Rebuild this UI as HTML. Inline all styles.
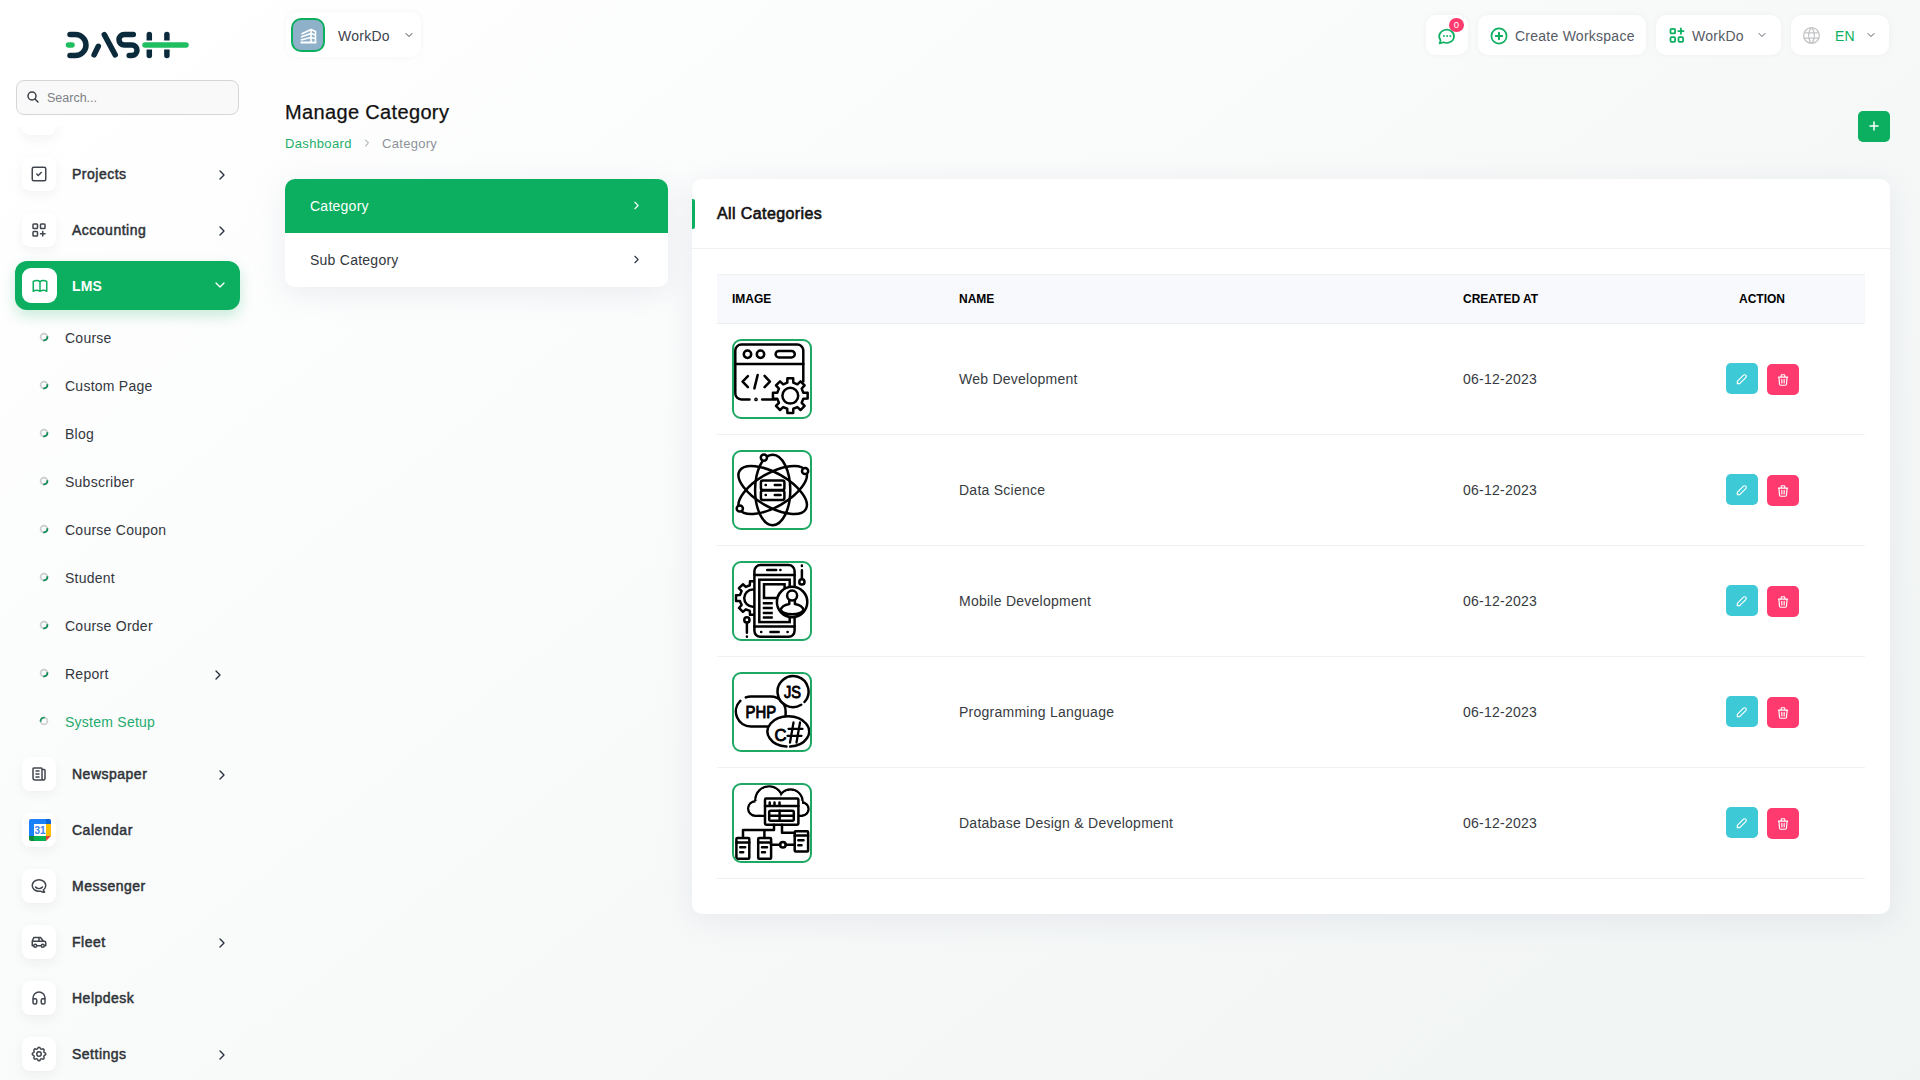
<!DOCTYPE html>
<html><head><meta charset="utf-8">
<style>
*{box-sizing:border-box;margin:0;padding:0}
html,body{width:1920px;height:1080px;overflow:hidden}
body{font-family:"Liberation Sans",sans-serif;background:#fff;position:relative;color:#293240}
.bg{position:absolute;left:0;top:0;width:1920px;height:1080px;background:linear-gradient(141.55deg,rgba(240,244,243,0) 3.46%,#f0f4f3 99.86%)}
.abs{position:absolute}
.ibox{position:absolute;width:34px;height:34px;background:#fff;border-radius:8px;box-shadow:0 4px 12px rgba(0,0,0,0.05);display:flex;align-items:center;justify-content:center}
.nav{position:absolute;left:72px;font-size:14px;color:#2f3338;-webkit-text-stroke:0.5px currentColor;letter-spacing:0.5px}
.ls{letter-spacing:0.25px}
.chev{position:absolute}
.sub{position:absolute;left:65px;font-size:14px;color:#33373d;letter-spacing:0.25px}
.dot{position:absolute;left:40px;width:7px;height:7px;border-radius:50%;border:1.3px solid #b9bec5;border-right-color:#0CAF60;border-bottom-color:#0CAF60;transform:rotate(-20deg)}
.hbox{position:absolute;top:15px;height:40px;background:#fff;border-radius:10px;box-shadow:0 0 6px rgba(0,0,0,0.04)}
.card{position:absolute;background:#fff;border-radius:10px;box-shadow:0 6px 30px rgba(182,186,203,0.24)}
.th{position:absolute;top:292px;font-size:12px;font-weight:bold;color:#000}
.td{position:absolute;font-size:14px;color:#373b42;letter-spacing:0.25px}
.img{position:absolute;left:732px;width:80px;height:80px;border:2px solid #1ea864;border-radius:9px;background:#fff;overflow:hidden}
.btn{position:absolute;width:32px;height:31px;border-radius:5px;display:flex;align-items:center;justify-content:center}
.rowline{position:absolute;left:717px;width:1148px;height:1px;background:#f0f0f0}
</style></head>
<body>
<div class="bg"></div>

<!-- LOGO -->
<svg class="abs" style="left:0;top:0" width="260" height="70" viewBox="0 0 260 70">
  <g fill="none" stroke-linecap="round" stroke-width="5.5">
    <path d="M70,34.5 H75.5 A10.5,10.5 0 0 1 75.5,55.5 H70" stroke="#0b2a3c"/>
    <line x1="68.5" y1="45" x2="72" y2="45" stroke="#1fbf61"/>
    <line x1="104.3" y1="34.6" x2="115.2" y2="54.9" stroke="#0b2a3c"/>
    <line x1="98.3" y1="46.3" x2="94.1" y2="54.9" stroke="#0b2a3c"/>
    <path d="M133.3,34.5 H124.25 A5.25,5.25 0 0 0 124.25,45 H131.75 A5.25,5.25 0 0 1 131.75,55.5 H129.2" stroke="#0b2a3c"/>
    <line x1="149.3" y1="34.5" x2="149.3" y2="55.5" stroke="#0b2a3c"/>
    <line x1="166.9" y1="34.5" x2="166.9" y2="55.5" stroke="#0b2a3c"/>
    <line x1="145" y1="45" x2="186" y2="45" stroke="#fff" stroke-width="9"/>
    <line x1="145" y1="45" x2="186" y2="45" stroke="#1fbf61"/>
  </g>
</svg>

<!-- SEARCH -->
<div class="abs" style="left:16px;top:80px;width:223px;height:35px;border:1px solid #d4d6d8;border-radius:8px;background:#f9f9f9"></div>
<svg class="abs" style="left:26px;top:90px" width="14" height="14" viewBox="0 0 14 14"><circle cx="6" cy="6" r="4" fill="none" stroke="#3a3f47" stroke-width="1.5"/><line x1="9" y1="9" x2="12" y2="12" stroke="#3a3f47" stroke-width="1.5" stroke-linecap="round"/></svg>
<div class="abs" style="left:47px;top:90.5px;font-size:12.5px;color:#7d8186">Search...</div>

<!-- SIDEBAR NAV -->
<div class="abs" style="left:0;top:127px;width:260px;height:953px;overflow:hidden">
<div class="abs" style="left:0;top:-127px;width:260px;height:1080px">
<div class="ibox" style="left:22px;top:101px"></div>
<div class="ibox" style="left:22px;top:157px"></div>
<svg class="abs" style="left:30px;top:165px" width="18" height="18" viewBox="0 0 24 24" fill="none" stroke="#41464e" stroke-width="2" stroke-linecap="round" stroke-linejoin="round"><path d="M3 5a2 2 0 0 1 2 -2h14a2 2 0 0 1 2 2v14a2 2 0 0 1 -2 2h-14a2 2 0 0 1 -2 -2z M9 12l2 2l4 -4"/></svg>
<div class="nav" style="top:166px">Projects</div>
<svg class="abs" style="left:214px;top:167px" width="16" height="16" viewBox="0 0 24 24" fill="none" stroke="#293240" stroke-width="2" stroke-linecap="round" stroke-linejoin="round"><path d="M9 6l6 6l-6 6"/></svg>
<div class="ibox" style="left:22px;top:213px"></div>
<svg class="abs" style="left:30px;top:221px" width="18" height="18" viewBox="0 0 24 24" fill="none" stroke="#41464e" stroke-width="2" stroke-linecap="round" stroke-linejoin="round"><path d="M4 5a1 1 0 0 1 1 -1h4a1 1 0 0 1 1 1v4a1 1 0 0 1 -1 1h-4a1 1 0 0 1 -1 -1z M14 5a1 1 0 0 1 1 -1h4a1 1 0 0 1 1 1v4a1 1 0 0 1 -1 1h-4a1 1 0 0 1 -1 -1z M4 15a1 1 0 0 1 1 -1h4a1 1 0 0 1 1 1v4a1 1 0 0 1 -1 1h-4a1 1 0 0 1 -1 -1z M14 17h6m-3 -3v6"/></svg>
<div class="nav" style="top:222px">Accounting</div>
<svg class="abs" style="left:214px;top:223px" width="16" height="16" viewBox="0 0 24 24" fill="none" stroke="#293240" stroke-width="2" stroke-linecap="round" stroke-linejoin="round"><path d="M9 6l6 6l-6 6"/></svg>
<div class="abs" style="left:15px;top:261px;width:225px;height:49px;background:#0CAF60;border-radius:12px;box-shadow:0 6px 14px rgba(12,175,96,0.22)"></div>
<div class="ibox" style="left:22px;top:268px;box-shadow:none;width:35px;height:35px;border-radius:9px"></div>
<svg class="abs" style="left:30.5px;top:277px" width="18" height="18" viewBox="0 0 24 24" fill="none" stroke="#0CAF60" stroke-width="2" stroke-linecap="round" stroke-linejoin="round"><path d="M3 19a9 9 0 0 1 9 0a9 9 0 0 1 9 0 M3 6a9 9 0 0 1 9 0a9 9 0 0 1 9 0 M3 6l0 13 M12 6l0 13 M21 6l0 13"/></svg>
<div class="nav" style="top:278px;color:#fff;font-weight:bold;-webkit-text-stroke:0;letter-spacing:0.2px">LMS</div>
<svg class="abs" style="left:212px;top:277px" width="16" height="16" viewBox="0 0 24 24" fill="none" stroke="#fff" stroke-width="2" stroke-linecap="round" stroke-linejoin="round"><path d="M6 9l6 6l6 -6"/></svg>
<div class="sub" style="top:330px">Course</div>
<svg class="abs" style="left:38px;top:331px" width="12" height="12" viewBox="0 0 12 12"><circle cx="6" cy="6" r="3.4" fill="none" stroke="#c9cbcd" stroke-width="1.7"/><path d="M9.4,6 A3.4,3.4 0 0 1 6,9.4" fill="none" stroke="#1f8f5f" stroke-width="1.9" stroke-linecap="round"/></svg>
<div class="sub" style="top:378px">Custom Page</div>
<svg class="abs" style="left:38px;top:379px" width="12" height="12" viewBox="0 0 12 12"><circle cx="6" cy="6" r="3.4" fill="none" stroke="#c9cbcd" stroke-width="1.7"/><path d="M9.4,6 A3.4,3.4 0 0 1 6,9.4" fill="none" stroke="#1f8f5f" stroke-width="1.9" stroke-linecap="round"/></svg>
<div class="sub" style="top:426px">Blog</div>
<svg class="abs" style="left:38px;top:427px" width="12" height="12" viewBox="0 0 12 12"><circle cx="6" cy="6" r="3.4" fill="none" stroke="#c9cbcd" stroke-width="1.7"/><path d="M9.4,6 A3.4,3.4 0 0 1 6,9.4" fill="none" stroke="#1f8f5f" stroke-width="1.9" stroke-linecap="round"/></svg>
<div class="sub" style="top:474px">Subscriber</div>
<svg class="abs" style="left:38px;top:475px" width="12" height="12" viewBox="0 0 12 12"><circle cx="6" cy="6" r="3.4" fill="none" stroke="#c9cbcd" stroke-width="1.7"/><path d="M9.4,6 A3.4,3.4 0 0 1 6,9.4" fill="none" stroke="#1f8f5f" stroke-width="1.9" stroke-linecap="round"/></svg>
<div class="sub" style="top:522px">Course Coupon</div>
<svg class="abs" style="left:38px;top:523px" width="12" height="12" viewBox="0 0 12 12"><circle cx="6" cy="6" r="3.4" fill="none" stroke="#c9cbcd" stroke-width="1.7"/><path d="M9.4,6 A3.4,3.4 0 0 1 6,9.4" fill="none" stroke="#1f8f5f" stroke-width="1.9" stroke-linecap="round"/></svg>
<div class="sub" style="top:570px">Student</div>
<svg class="abs" style="left:38px;top:571px" width="12" height="12" viewBox="0 0 12 12"><circle cx="6" cy="6" r="3.4" fill="none" stroke="#c9cbcd" stroke-width="1.7"/><path d="M9.4,6 A3.4,3.4 0 0 1 6,9.4" fill="none" stroke="#1f8f5f" stroke-width="1.9" stroke-linecap="round"/></svg>
<div class="sub" style="top:618px">Course Order</div>
<svg class="abs" style="left:38px;top:619px" width="12" height="12" viewBox="0 0 12 12"><circle cx="6" cy="6" r="3.4" fill="none" stroke="#c9cbcd" stroke-width="1.7"/><path d="M9.4,6 A3.4,3.4 0 0 1 6,9.4" fill="none" stroke="#1f8f5f" stroke-width="1.9" stroke-linecap="round"/></svg>
<div class="sub" style="top:666px">Report</div>
<svg class="abs" style="left:38px;top:667px" width="12" height="12" viewBox="0 0 12 12"><circle cx="6" cy="6" r="3.4" fill="none" stroke="#c9cbcd" stroke-width="1.7"/><path d="M9.4,6 A3.4,3.4 0 0 1 6,9.4" fill="none" stroke="#1f8f5f" stroke-width="1.9" stroke-linecap="round"/></svg>
<svg class="abs" style="left:210px;top:667px" width="16" height="16" viewBox="0 0 24 24" fill="none" stroke="#293240" stroke-width="2" stroke-linecap="round" stroke-linejoin="round"><path d="M9 6l6 6l-6 6"/></svg>
<div class="sub" style="top:714px;color:#1faa6e">System Setup</div>
<svg class="abs" style="left:38px;top:715px" width="12" height="12" viewBox="0 0 12 12"><circle cx="6" cy="6" r="3.4" fill="none" stroke="#cfd2d0" stroke-width="1.7"/><path d="M2.6,6 A3.4,3.4 0 0 1 6,2.6" fill="none" stroke="#2a9a6a" stroke-width="1.9" stroke-linecap="round"/></svg>
<div class="ibox" style="left:22px;top:757px"></div>
<svg class="abs" style="left:30px;top:765px" width="18" height="18" viewBox="0 0 24 24" fill="none" stroke="#41464e" stroke-width="2" stroke-linecap="round" stroke-linejoin="round"><path d="M16 6h3a1 1 0 0 1 1 1v11a2 2 0 0 1 -4 0v-13a1 1 0 0 0 -1 -1h-10a1 1 0 0 0 -1 1v12a3 3 0 0 0 3 3h11 M8 8l4 0 M8 12l4 0 M8 16l4 0"/></svg>
<div class="nav" style="top:766px">Newspaper</div>
<svg class="abs" style="left:214px;top:767px" width="16" height="16" viewBox="0 0 24 24" fill="none" stroke="#293240" stroke-width="2" stroke-linecap="round" stroke-linejoin="round"><path d="M9 6l6 6l-6 6"/></svg>
<div class="ibox" style="left:22px;top:813px"></div>
<svg class="abs" style="left:29px;top:819px" width="22" height="22" viewBox="0 0 22 22">
<path d="M0,2 Q0,0 2,0 H17 V5 H5 V17 H0 Z" fill="#1a80f5"/>
<path d="M17,0 H20.5 Q22,0 22,1.5 V5 H17Z" fill="#0b64d8"/>
<rect x="17" y="5" width="5" height="12" fill="#fbbc04"/>
<rect x="5" y="17" width="12" height="5" fill="#06b24f"/>
<path d="M0,17 H5 V22 H2 Q0,22 0,20 Z" fill="#0a8a3a"/>
<path d="M17,17 H22 L17,22 Z" fill="#ea4335"/>
<rect x="5" y="5" width="12" height="12" fill="#fff"/>
<text x="11" y="14.8" style="font-family:'Liberation Sans',sans-serif;font-size:10px;font-weight:bold" fill="#3b82f0" text-anchor="middle">31</text>
</svg>
<div class="nav" style="top:822px">Calendar</div>
<div class="ibox" style="left:22px;top:869px"></div>
<svg class="abs" style="left:30px;top:877px" width="18" height="18" viewBox="0 0 24 24" fill="none" stroke="#41464e" stroke-width="2" stroke-linecap="round" stroke-linejoin="round"><path d="M17.802 17.292s.077 -.055 .2 -.149c1.843 -1.425 3 -3.49 3 -5.789c0 -4.286 -4.03 -7.764 -9 -7.764c-4.97 0 -9 3.478 -9 7.764c0 4.288 4.03 7.646 9 7.646c.424 0 1.12 -.028 2.088 -.084c1.262 .82 3.104 1.493 4.716 1.493c.499 0 .734 -.41 .414 -.828c-.486 -.596 -1.156 -1.551 -1.416 -2.29z M7.5 13.5c2.5 2.5 6.5 2.5 9 0"/></svg>
<div class="nav" style="top:878px">Messenger</div>
<div class="ibox" style="left:22px;top:925px"></div>
<svg class="abs" style="left:30px;top:933px" width="18" height="18" viewBox="0 0 24 24" fill="none" stroke="#41464e" stroke-width="2" stroke-linecap="round" stroke-linejoin="round"><path d="M5 17a2 2 0 1 0 4 0a2 2 0 1 0 -4 0 M15 17a2 2 0 1 0 4 0a2 2 0 1 0 -4 0 M5 17h-2v-6l2 -5h9l4 5h1a2 2 0 0 1 2 2v4h-2m-4 0h-6m-6 -6h15m-6 0v-5"/></svg>
<div class="nav" style="top:934px">Fleet</div>
<svg class="abs" style="left:214px;top:935px" width="16" height="16" viewBox="0 0 24 24" fill="none" stroke="#293240" stroke-width="2" stroke-linecap="round" stroke-linejoin="round"><path d="M9 6l6 6l-6 6"/></svg>
<div class="ibox" style="left:22px;top:981px"></div>
<svg class="abs" style="left:30px;top:989px" width="18" height="18" viewBox="0 0 24 24" fill="none" stroke="#41464e" stroke-width="2" stroke-linecap="round" stroke-linejoin="round"><path d="M4 15a2 2 0 0 1 2 -2h1a2 2 0 0 1 2 2v3a2 2 0 0 1 -2 2h-1a2 2 0 0 1 -2 -2z M15 15a2 2 0 0 1 2 -2h1a2 2 0 0 1 2 2v3a2 2 0 0 1 -2 2h-1a2 2 0 0 1 -2 -2z M4 15v-3a8 8 0 0 1 16 0v3"/></svg>
<div class="nav" style="top:990px">Helpdesk</div>
<div class="ibox" style="left:22px;top:1037px"></div>
<svg class="abs" style="left:30px;top:1045px" width="18" height="18" viewBox="0 0 24 24" fill="none" stroke="#41464e" stroke-width="2" stroke-linecap="round" stroke-linejoin="round"><path d="M10.325 4.317c.426 -1.756 2.924 -1.756 3.35 0a1.724 1.724 0 0 0 2.573 1.066c1.543 -.94 3.31 .826 2.37 2.37a1.724 1.724 0 0 0 1.065 2.572c1.756 .426 1.756 2.924 0 3.35a1.724 1.724 0 0 0 -1.066 2.573c.94 1.543 -.826 3.31 -2.37 2.37a1.724 1.724 0 0 0 -2.572 1.065c-.426 1.756 -2.924 1.756 -3.35 0a1.724 1.724 0 0 0 -2.573 -1.066c-1.543 .94 -3.31 -.826 -2.37 -2.37a1.724 1.724 0 0 0 -1.065 -2.572c-1.756 -.426 -1.756 -2.924 0 -3.35a1.724 1.724 0 0 0 1.066 -2.573c-.94 -1.543 .826 -3.31 2.37 -2.37c1 .608 2.296 .07 2.572 -1.065z M9 12a3 3 0 1 0 6 0a3 3 0 0 0 -6 0"/></svg>
<div class="nav" style="top:1046px">Settings</div>
<svg class="abs" style="left:214px;top:1047px" width="16" height="16" viewBox="0 0 24 24" fill="none" stroke="#293240" stroke-width="2" stroke-linecap="round" stroke-linejoin="round"><path d="M9 6l6 6l-6 6"/></svg>
</div></div>

<!-- HEADER -->
<div class="hbox" style="left:286px;top:12px;width:135px;height:45px"></div>
<div class="abs" style="left:291px;top:18px;width:34px;height:34px;border:2px solid #0CAF60;border-radius:10px;background:#8fb0c9;overflow:hidden">
<svg class="abs" style="left:6px;top:6px" width="20" height="20" viewBox="0 0 20 20" fill="none" stroke="#fff" stroke-width="1.6" stroke-linejoin="round">
<path d="M2.5,8 L12,3.5 L16.5,5.5 V15.5"/><path d="M2,11 L12,7.5 L16.5,9"/><path d="M1.8,14 L12,11.5 L16.5,12.5"/><path d="M1.5,16.5 H17.5" stroke-width="1.8"/><path d="M12,3.5 V16"/>
</svg></div>
<div class="abs" style="left:338px;top:28px;font-size:14px;color:#3d434b;letter-spacing:0.25px">WorkDo</div>
<svg class="abs" style="left:403px;top:29px" width="12" height="12" viewBox="0 0 24 24" fill="none" stroke="#3d434b" stroke-width="2" stroke-linecap="round" stroke-linejoin="round"><path d="M6 9l6 6l6 -6"/></svg>

<div class="hbox" style="left:1426px;width:42px"></div>
<svg class="abs" style="left:1437px;top:26px" width="20" height="20" viewBox="0 0 20 20" fill="none" stroke="#0CAF60" stroke-width="1.7" stroke-linecap="round" stroke-linejoin="round">
<path d="M2.6,17.4 L3.6,14.2 A7.4,6.6 0 1 1 6.4,16.3 Z"/>
<circle cx="6.8" cy="10" r="0.5" fill="#0CAF60" stroke-width="0.9"/><circle cx="10" cy="10" r="0.5" fill="#0CAF60" stroke-width="0.9"/><circle cx="13.2" cy="10" r="0.5" fill="#0CAF60" stroke-width="0.9"/>
</svg>
<div class="abs" style="left:1449px;top:17.5px;width:15px;height:14.5px;border-radius:50%;background:#ff3a6e;color:#fff;font-size:9.5px;text-align:center;line-height:14.5px">0</div>

<div class="hbox" style="left:1478px;width:168px"></div>
<svg class="abs" style="left:1489px;top:26px" width="20" height="20" viewBox="0 0 20 20" fill="none" stroke="#0CAF60" stroke-width="1.7" stroke-linecap="round">
<circle cx="10" cy="10" r="7.6"/><path d="M10,6.8 V13.2 M6.8,10 H13.2" stroke-width="2"/>
</svg>
<div class="abs" style="left:1515px;top:28px;font-size:14px;color:#555b66;letter-spacing:0.25px">Create Workspace</div>

<div class="hbox" style="left:1656px;width:125px"></div>
<svg class="abs" style="left:1668px;top:26px" width="18" height="18" viewBox="0 0 18 18" fill="none" stroke="#0CAF60" stroke-width="1.8" stroke-linecap="round" stroke-linejoin="round">
<rect x="2.5" y="2.8" width="4.6" height="4.6" rx="1"/><rect x="2.5" y="11.2" width="4.6" height="4.6" rx="1"/><rect x="10.5" y="11.2" width="4.6" height="4.6" rx="1"/><path d="M10.3,5.1 H15.6 M12.95,2.4 V7.8"/>
</svg>
<div class="abs" style="left:1692px;top:28px;font-size:14px;color:#555b66;letter-spacing:0.25px">WorkDo</div>
<svg class="abs" style="left:1756px;top:29px" width="12" height="12" viewBox="0 0 24 24" fill="none" stroke="#555b66" stroke-width="2" stroke-linecap="round" stroke-linejoin="round"><path d="M6 9l6 6l6 -6"/></svg>

<div class="hbox" style="left:1791px;width:98px"></div>
<svg class="abs" style="left:1801px;top:25px" width="21" height="21" viewBox="0 0 24 24" fill="none" stroke="#c2c4c6" stroke-width="1.5" stroke-linecap="round" stroke-linejoin="round">
<path d="M3 12a9 9 0 1 0 18 0a9 9 0 0 0 -18 0 M3.6 9h16.8 M3.6 15h16.8 M11.5 3a17 17 0 0 0 0 18 M12.5 3a17 17 0 0 1 0 18"/>
</svg>
<div class="abs" style="left:1835px;top:28px;font-size:14px;color:#0CAF60;letter-spacing:0.25px">EN</div>
<svg class="abs" style="left:1865px;top:29px" width="12" height="12" viewBox="0 0 24 24" fill="none" stroke="#555b66" stroke-width="2" stroke-linecap="round" stroke-linejoin="round"><path d="M6 9l6 6l6 -6"/></svg>

<!-- TITLE -->
<div class="abs" style="left:285px;top:101px;font-size:20px;color:#111;letter-spacing:0.35px;-webkit-text-stroke:0.25px currentColor">Manage Category</div>
<div class="abs" style="left:285px;top:135.5px;font-size:13px;color:#1fae6a;letter-spacing:0.35px">Dashboard</div>
<svg class="abs" style="left:361px;top:137px" width="12" height="12" viewBox="0 0 24 24" fill="none" stroke="#8d939b" stroke-width="2" stroke-linecap="round" stroke-linejoin="round"><path d="M9 6l6 6l-6 6"/></svg>
<div class="abs" style="left:382px;top:135.5px;font-size:13px;color:#8d939b;letter-spacing:0.3px">Category</div>
<div class="abs" style="left:1858px;top:111px;width:32px;height:31px;background:#0CAF60;border-radius:5px"></div>
<svg class="abs" style="left:1868px;top:120px" width="12" height="12" viewBox="0 0 12 12" stroke="#fff" stroke-width="1.5" stroke-linecap="round"><path d="M6,2 V10 M2,6 H10"/></svg>

<!-- LEFT MENU CARD -->
<div class="card" style="left:285px;top:179px;width:383px;height:108px;overflow:hidden">
  <div class="abs" style="left:0;top:0;width:383px;height:54px;background:#0CAF60"></div>
</div>
<div class="abs" style="left:310px;top:198px;font-size:14px;color:#fff;letter-spacing:0.25px">Category</div>
<svg class="abs" style="left:630px;top:199px" width="13" height="13" viewBox="0 0 24 24" fill="none" stroke="#fff" stroke-width="2" stroke-linecap="round" stroke-linejoin="round"><path d="M9 6l6 6l-6 6"/></svg>
<div class="abs" style="left:310px;top:252px;font-size:14px;color:#33373d;letter-spacing:0.25px">Sub Category</div>
<svg class="abs" style="left:630px;top:253px" width="13" height="13" viewBox="0 0 24 24" fill="none" stroke="#293240" stroke-width="2" stroke-linecap="round" stroke-linejoin="round"><path d="M9 6l6 6l-6 6"/></svg>

<!-- TABLE CARD -->
<div class="card" style="left:692px;top:179px;width:1198px;height:735px"></div>
<div class="abs" style="left:692px;top:199px;width:3px;height:29.5px;background:#0CAF60;border-radius:0 2px 2px 0"></div>
<div class="abs" style="left:717px;top:204.5px;font-size:16px;color:#111;-webkit-text-stroke:0.6px currentColor;letter-spacing:0.4px">All Categories</div>
<div class="abs" style="left:692px;top:248px;width:1198px;height:1px;background:#f1f1f1"></div>

<div class="abs" style="left:717px;top:274px;width:1148px;height:50px;background:#f8f9fc;border-top:1px solid #eef0f2;border-bottom:1px solid #eceef0"></div>
<div class="th" style="left:732px">IMAGE</div>
<div class="th" style="left:959px">NAME</div>
<div class="th" style="left:1463px">CREATED AT</div>
<div class="th" style="left:1739px">ACTION</div>
<div class="img" style="top:339px"><svg class="abs" style="left:-2px;top:-2px" width="80" height="80" viewBox="0 0 80 80"><g stroke="#000" stroke-width="2.5" fill="none" stroke-linecap="round" stroke-linejoin="round"><path d="M17.5,60.4 H9.3 A6,6 0 0 1 3.3,54.4 V11.6 A6,6 0 0 1 9.3,5.6 H65.3 A6,6 0 0 1 71.3,11.6 V42.5"/><path d="M30.2,60.4 H43.6"/><circle cx="24" cy="60.4" r="0.6" fill="#000"/><path d="M3.3,25 H71.3"/><circle cx="15.5" cy="15.2" r="3.7"/><circle cx="28.5" cy="15.2" r="3.7"/><rect x="43.6" y="11.9" width="19.2" height="6.5" rx="3.25"/><path d="M15.9,37.1 L10.6,42.6 L15.9,48.2 M25.7,35.9 L22.4,49.4 M32.6,36.8 L37.9,42.6 L32.6,48.2"/><path d="M61.33,69.75 L61.19,74.06 L55.41,74.06 L55.27,69.75 L51.21,68.07 L48.07,71.02 L43.98,66.93 L46.93,63.79 L45.25,59.73 L40.94,59.59 L40.94,53.81 L45.25,53.67 L46.93,49.61 L43.98,46.47 L48.07,42.38 L51.21,45.33 L55.27,43.65 L55.41,39.34 L61.19,39.34 L61.33,43.65 L65.39,45.33 L68.53,42.38 L72.62,46.47 L69.67,49.61 L71.35,53.67 L75.66,53.81 L75.66,59.59 L71.35,59.73 L69.67,63.79 L72.62,66.93 L68.53,71.02 L65.39,68.07 Z" fill="#fff"/><circle cx="58.3" cy="56.7" r="7.9"/></g></svg></div>
<div class="td" style="left:959px;top:370.5px">Web Development</div>
<div class="td" style="left:1463px;top:370.5px">06-12-2023</div>
<div class="btn" style="left:1726px;top:363px;background:#3ec9d6"><svg width="14" height="14" viewBox="0 0 24 24" fill="none" stroke="#fff" stroke-width="2" stroke-linecap="round" stroke-linejoin="round"><path d="M4 20h4l10.5 -10.5a2.828 2.828 0 1 0 -4 -4l-10.5 10.5v4"/></svg></div>
<div class="btn" style="left:1767px;top:364px;background:#ff3a6e"><svg width="14" height="14" viewBox="0 0 24 24" fill="none" stroke="#fff" stroke-width="2" stroke-linecap="round" stroke-linejoin="round"><path d="M4 7l16 0 M10 11l0 6 M14 11l0 6 M5 7l1 12a2 2 0 0 0 2 2h8a2 2 0 0 0 2 -2l1 -12 M9 7v-3a1 1 0 0 1 1 -1h4a1 1 0 0 1 1 1v3"/></svg></div>
<div class="rowline" style="top:434px"></div>
<div class="img" style="top:450px"><svg class="abs" style="left:-2px;top:-2px" width="80" height="80" viewBox="0 0 80 80"><g stroke="#000" stroke-width="2.5" fill="none" stroke-linecap="round" stroke-linejoin="round"><ellipse cx="40.7" cy="40" rx="17.6" ry="35.2"/><ellipse cx="40.7" cy="40" rx="38.3" ry="16.8" transform="rotate(30 40.7 40)"/><ellipse cx="40.7" cy="40" rx="38.3" ry="16.8" transform="rotate(-30 40.7 40)"/><circle cx="31.9" cy="7.6" r="3.1" fill="#fff"/><circle cx="73.1" cy="21" r="3.1" fill="#fff"/><circle cx="7.8" cy="58.5" r="3.1" fill="#fff"/><rect x="28.9" y="30.6" width="23.5" height="9.3" rx="2" fill="#fff"/><rect x="28.9" y="40.6" width="23.5" height="9.3" rx="2" fill="#fff"/><path d="M33.6,35.1 h0.3 M42.8,35.1 h5.8 M33.6,45 h0.3 M42.8,45 h5.8"/></g></svg></div>
<div class="td" style="left:959px;top:481.5px">Data Science</div>
<div class="td" style="left:1463px;top:481.5px">06-12-2023</div>
<div class="btn" style="left:1726px;top:474px;background:#3ec9d6"><svg width="14" height="14" viewBox="0 0 24 24" fill="none" stroke="#fff" stroke-width="2" stroke-linecap="round" stroke-linejoin="round"><path d="M4 20h4l10.5 -10.5a2.828 2.828 0 1 0 -4 -4l-10.5 10.5v4"/></svg></div>
<div class="btn" style="left:1767px;top:475px;background:#ff3a6e"><svg width="14" height="14" viewBox="0 0 24 24" fill="none" stroke="#fff" stroke-width="2" stroke-linecap="round" stroke-linejoin="round"><path d="M4 7l16 0 M10 11l0 6 M14 11l0 6 M5 7l1 12a2 2 0 0 0 2 2h8a2 2 0 0 0 2 -2l1 -12 M9 7v-3a1 1 0 0 1 1 -1h4a1 1 0 0 1 1 1v3"/></svg></div>
<div class="rowline" style="top:545px"></div>
<div class="img" style="top:561px"><svg class="abs" style="left:-2px;top:-2px" width="80" height="80" viewBox="0 0 80 80"><g stroke="#000" stroke-width="2.5" fill="none" stroke-linecap="round" stroke-linejoin="round"><path d="M33.66,34.12 L37.57,34.31 L37.57,39.89 L33.66,40.08 L32.00,44.09 L34.63,46.98 L30.68,50.93 L27.79,48.30 L23.78,49.96 L23.59,53.87 L18.01,53.87 L17.82,49.96 L13.81,48.30 L10.92,50.93 L6.97,46.98 L9.60,44.09 L7.94,40.08 L4.03,39.89 L4.03,34.31 L7.94,34.12 L9.60,30.11 L6.97,27.22 L10.92,23.27 L13.81,25.90 L17.82,24.24 L18.01,20.33 L23.59,20.33 L23.78,24.24 L27.79,25.90 L30.68,23.27 L34.63,27.22 L32.00,30.11 Z"/><circle cx="20.8" cy="37.1" r="8.6"/><rect x="22.4" y="4.1" width="40.2" height="71.7" rx="6" fill="#fff"/><path d="M22.4,14 H62.6 M22.4,65.4 H62.6"/><path d="M35.2,8.9 H44.2 M48.3,8.9 h0.2 M29.1,71 h0.2 M38.4,71 H46.7 M55.5,71 h0.2"/><rect x="27.3" y="18.7" width="30.4" height="42.4" stroke-linejoin="miter" stroke-linecap="butt"/><rect x="32" y="23.3" width="20.6" height="13.7" stroke-linejoin="miter"/><path d="M30.8,42.2 H40.8 M30.8,46.9 H40.8 M30.8,52 H40.8 M30.8,56.6 H40.8" stroke-linecap="butt"/><circle cx="60.1" cy="41" r="15.2" fill="#fff"/><circle cx="60.1" cy="34.6" r="5"/><path d="M57.3,39.3 V43 C52.5,43.8 49.5,45.5 48.6,49 C52,54.8 68.2,54.8 71.6,49 C70.7,45.5 67.7,43.8 62.9,43 V39.3"/><path d="M69.9,4.5 v0.4 M69.9,9.2 V18"/><circle cx="69.9" cy="20.9" r="2.6"/><circle cx="14.9" cy="58.9" r="2.6"/><path d="M14.9,61.6 V71.8 M14.9,75.6 v0.2"/></g></svg></div>
<div class="td" style="left:959px;top:592.5px">Mobile Development</div>
<div class="td" style="left:1463px;top:592.5px">06-12-2023</div>
<div class="btn" style="left:1726px;top:585px;background:#3ec9d6"><svg width="14" height="14" viewBox="0 0 24 24" fill="none" stroke="#fff" stroke-width="2" stroke-linecap="round" stroke-linejoin="round"><path d="M4 20h4l10.5 -10.5a2.828 2.828 0 1 0 -4 -4l-10.5 10.5v4"/></svg></div>
<div class="btn" style="left:1767px;top:586px;background:#ff3a6e"><svg width="14" height="14" viewBox="0 0 24 24" fill="none" stroke="#fff" stroke-width="2" stroke-linecap="round" stroke-linejoin="round"><path d="M4 7l16 0 M10 11l0 6 M14 11l0 6 M5 7l1 12a2 2 0 0 0 2 2h8a2 2 0 0 0 2 -2l1 -12 M9 7v-3a1 1 0 0 1 1 -1h4a1 1 0 0 1 1 1v3"/></svg></div>
<div class="rowline" style="top:656px"></div>
<div class="img" style="top:672px"><svg class="abs" style="left:-2px;top:-2px" width="80" height="80" viewBox="0 0 80 80"><g stroke="#000" stroke-width="2.5" fill="none" stroke-linecap="round" stroke-linejoin="round"><path d="M13.77,25.4 A15,15 0 0 1 18.9,24.5 H38.9 A14.7,14.7 0 0 1 53.6,39.2 V44"/><path d="M8.3,28.9 A15,15 0 0 0 18.9,54.5 H36"/><path d="M69.2,32.75 A15.5,15.5 0 1 1 72.5,30.0" fill="#fff"/><path d="M54.4,74.6 A20.8,15.2 0 1 1 58.2,74.6" fill="#fff"/><text x="13.6" y="45.6" font-family="Liberation Sans" font-size="16.5" fill="#000" stroke="#000" stroke-width="0.9" textLength="30.5" lengthAdjust="spacingAndGlyphs">PHP</text><text x="52" y="26.2" font-family="Liberation Sans" font-size="16" fill="#000" stroke="#000" stroke-width="0.9" textLength="17" lengthAdjust="spacingAndGlyphs">JS</text><text x="42.6" y="68.8" font-family="Liberation Sans" font-size="17" fill="#000" stroke="#000" stroke-width="0.9" textLength="12" lengthAdjust="spacingAndGlyphs">C</text><path d="M61.5,50.5 L58,70.5 M68,50.5 L64.5,70.5 M56.5,56.8 H70.5 M55.5,63.8 H69.5" stroke-width="2.3"/></g></svg></div>
<div class="td" style="left:959px;top:703.5px">Programming Language</div>
<div class="td" style="left:1463px;top:703.5px">06-12-2023</div>
<div class="btn" style="left:1726px;top:696px;background:#3ec9d6"><svg width="14" height="14" viewBox="0 0 24 24" fill="none" stroke="#fff" stroke-width="2" stroke-linecap="round" stroke-linejoin="round"><path d="M4 20h4l10.5 -10.5a2.828 2.828 0 1 0 -4 -4l-10.5 10.5v4"/></svg></div>
<div class="btn" style="left:1767px;top:697px;background:#ff3a6e"><svg width="14" height="14" viewBox="0 0 24 24" fill="none" stroke="#fff" stroke-width="2" stroke-linecap="round" stroke-linejoin="round"><path d="M4 7l16 0 M10 11l0 6 M14 11l0 6 M5 7l1 12a2 2 0 0 0 2 2h8a2 2 0 0 0 2 -2l1 -12 M9 7v-3a1 1 0 0 1 1 -1h4a1 1 0 0 1 1 1v3"/></svg></div>
<div class="rowline" style="top:767px"></div>
<div class="img" style="top:783px"><svg class="abs" style="left:-2px;top:-2px" width="80" height="80" viewBox="0 0 80 80"><g stroke="#000" stroke-width="2.5" fill="none" stroke-linecap="round" stroke-linejoin="round"><circle cx="23.5" cy="25.5" r="7.3"/><circle cx="37" cy="17" r="13.6"/><circle cx="58.5" cy="18.5" r="12"/><circle cx="70" cy="26" r="6.5"/><path d="M23.5,32.8 H70"/><circle cx="23.5" cy="25.5" r="6.1" fill="#fff" stroke="none"/><circle cx="37" cy="17" r="12.4" fill="#fff" stroke="none"/><circle cx="58.5" cy="18.5" r="10.8" fill="#fff" stroke="none"/><circle cx="70" cy="26" r="5.3" fill="#fff" stroke="none"/><rect x="23.5" y="18" width="46.5" height="13.6" fill="#fff" stroke="none"/><rect x="33" y="15.6" width="33.4" height="26.1" rx="1.2" fill="#fff"/><path d="M33,22.9 H66.4 M37.7,19.6 v2.8 M42.5,19.6 v2.8 M47.5,19.6 v2.8"/><rect x="37.2" y="27.8" width="24.6" height="10" rx="1.5"/><path d="M37.2,32.8 H61.8 M47.6,27.8 V37.8"/><path d="M42,41.7 V47 H11 V54 M32.4,47 V54 M50,41.7 V49.7 H62.5"/><rect x="4.4" y="55.1" width="12.9" height="20.7" rx="1"/><path d="M4.4,59.6 H17.3 M8.2,64.3 H13.200000000000001 M8.2,69.3 H11.2"/><rect x="26.2" y="55.1" width="12.9" height="20.7" rx="1"/><path d="M26.2,59.6 H39.1 M30.0,64.3 H35.0 M30.0,69.3 H33.0"/><rect x="62.7" y="48.2" width="13.4" height="20.2" rx="1"/><path d="M62.7,52.6 H76.1 M66.3,57.2 H71.5 M66.3,62.2 H69.5"/><path d="M39,61.8 H48.1 M53.7,61.8 H62.7"/><circle cx="50.9" cy="61.8" r="2.8"/></g></svg></div>
<div class="td" style="left:959px;top:814.5px">Database Design &amp; Development</div>
<div class="td" style="left:1463px;top:814.5px">06-12-2023</div>
<div class="btn" style="left:1726px;top:807px;background:#3ec9d6"><svg width="14" height="14" viewBox="0 0 24 24" fill="none" stroke="#fff" stroke-width="2" stroke-linecap="round" stroke-linejoin="round"><path d="M4 20h4l10.5 -10.5a2.828 2.828 0 1 0 -4 -4l-10.5 10.5v4"/></svg></div>
<div class="btn" style="left:1767px;top:808px;background:#ff3a6e"><svg width="14" height="14" viewBox="0 0 24 24" fill="none" stroke="#fff" stroke-width="2" stroke-linecap="round" stroke-linejoin="round"><path d="M4 7l16 0 M10 11l0 6 M14 11l0 6 M5 7l1 12a2 2 0 0 0 2 2h8a2 2 0 0 0 2 -2l1 -12 M9 7v-3a1 1 0 0 1 1 -1h4a1 1 0 0 1 1 1v3"/></svg></div>
<div class="rowline" style="top:878px"></div>

</body></html>
